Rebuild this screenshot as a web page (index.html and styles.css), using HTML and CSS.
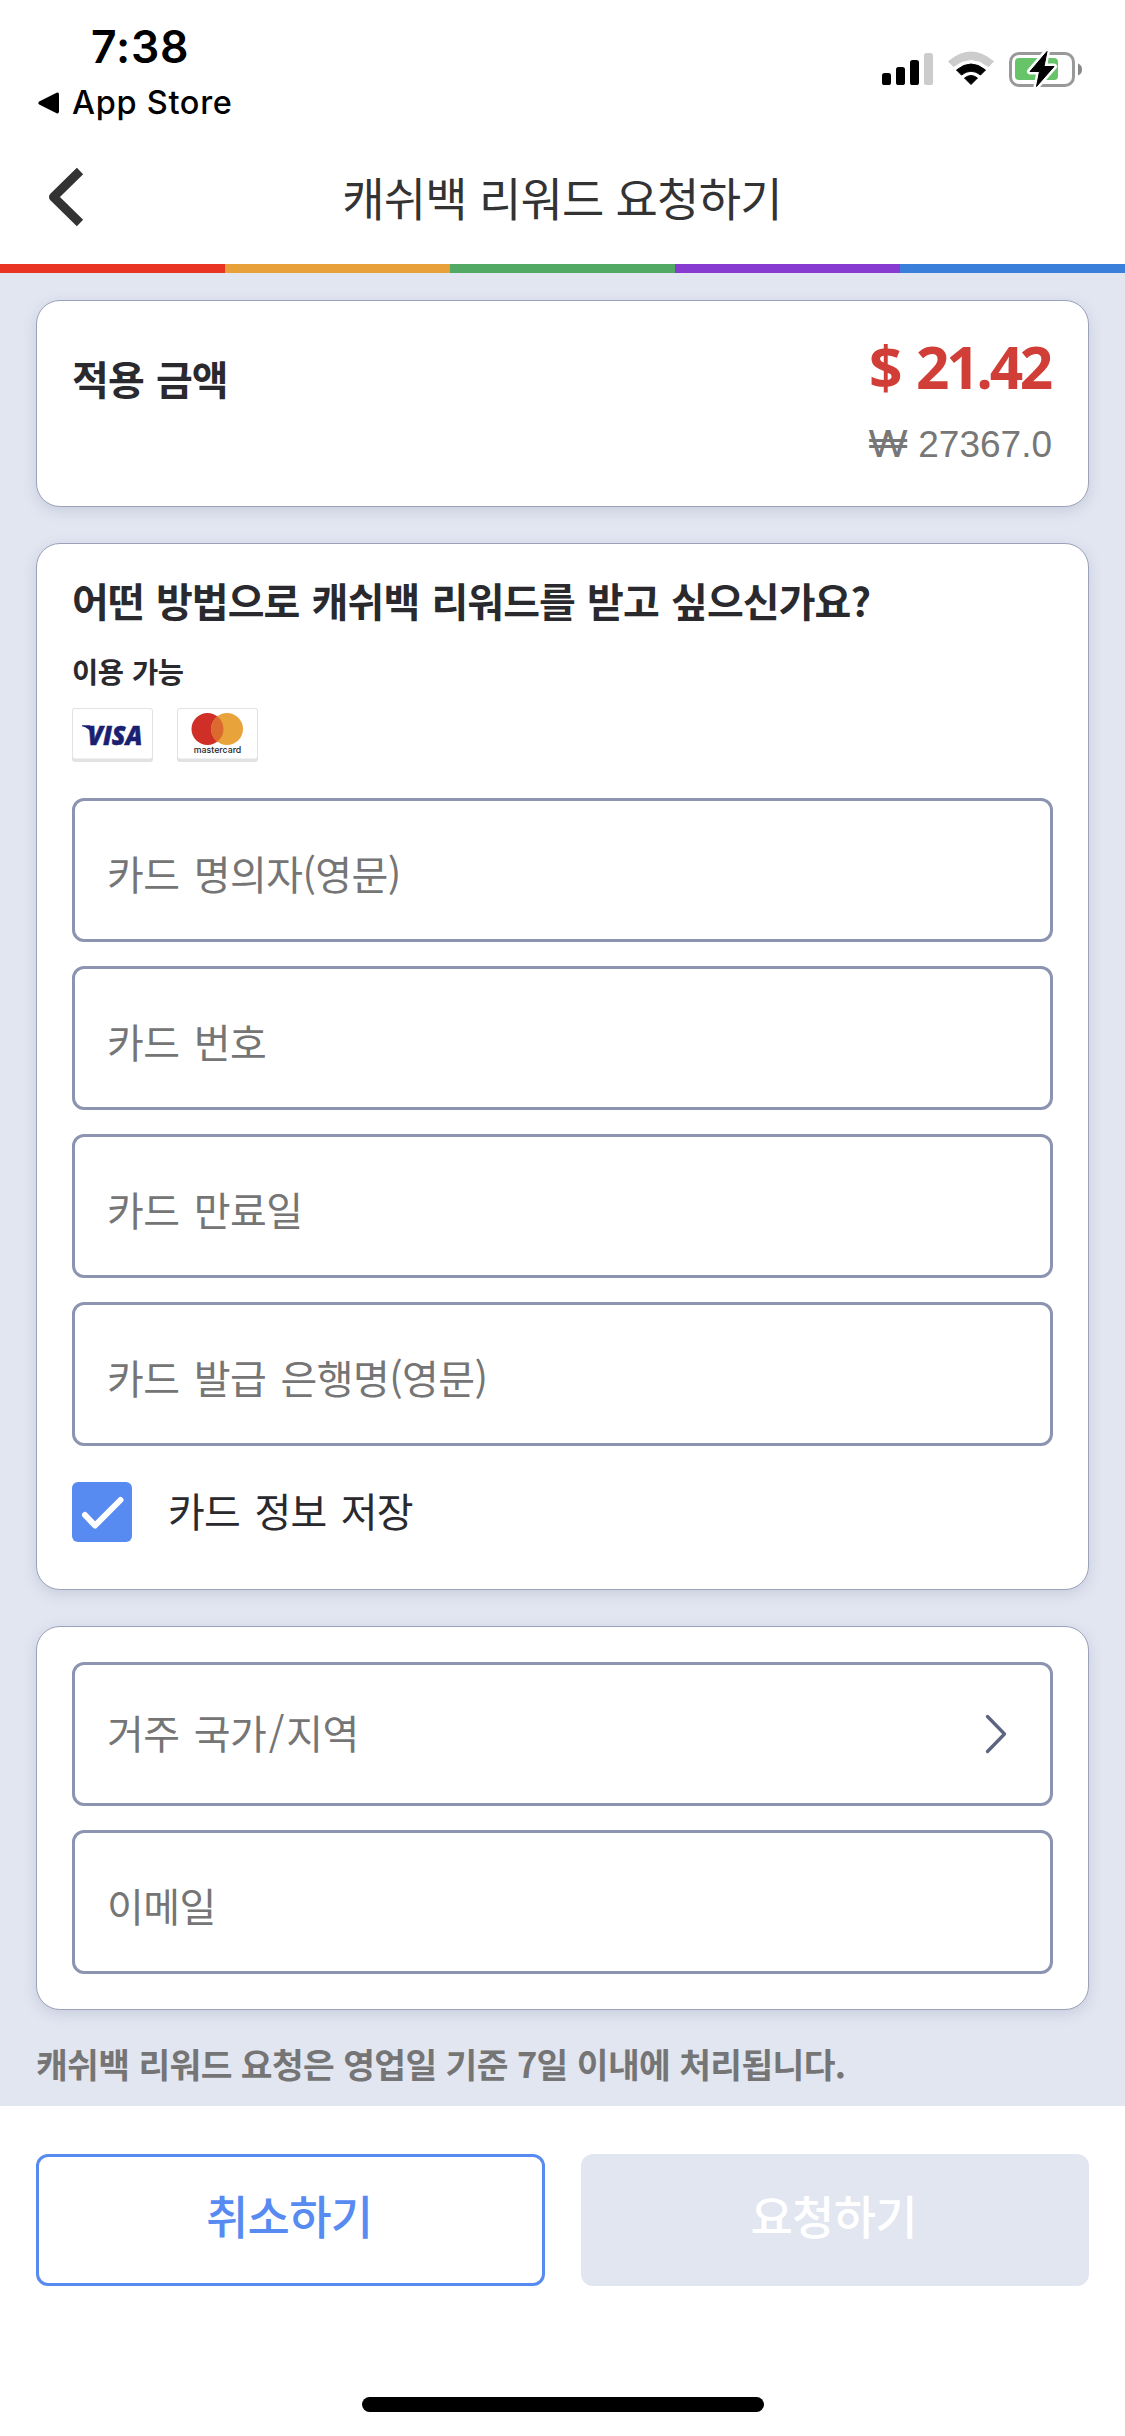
FILE: index.html
```html
<!DOCTYPE html>
<html lang="ko">
<head>
<meta charset="utf-8">
<title>캐쉬백 리워드 요청하기</title>
<link rel="stylesheet" href="styles.css">
</head>
<body>
<div class="screen">
  <div class="status">
    <div class="status-left">
      <div class="clock">7:38</div>
      <div class="return-app">
        <svg class="return-icon" width="22" height="22" viewBox="0 0 22 22"><path d="M1.2 9.6 18.6.8Q21 0 21 2.4V19.600Q21 22 18.600 21.200L1.200 12.400Q-.6 11 1.200 9.600Z"/></svg>
        <span>App Store</span>
      </div>
    </div>
    <svg class="status-icons" width="202" height="40" viewBox="0 0 202 40">
      <rect x="1" y="24" width="9" height="12" rx="2.600"/>
      <rect x="15" y="18" width="9" height="18" rx="2.600"/>
      <rect x="29" y="11" width="9" height="25" rx="2.600"/>
      <rect x="43" y="4" width="9" height="32" rx="2.600" fill="#ccc"/>
      <path d="M67.500 12.500Q90 -6.500 112.500 12.500L107.500 17.500Q90 3.500 72.500 17.500Z" fill="#ccc" stroke="#ccc" stroke-linejoin="round"/>
      <path d="M75.500 21Q90 9 104.500 21L99.500 26Q90 18.500 80.500 26Z" stroke="#000" stroke-linejoin="round"/>
      <path d="M83.500 29Q90 24 96.500 29L90 35.500Z" stroke="#000" stroke-linejoin="round"/>
      <rect x="129.500" y="4.500" width="63" height="32" rx="8.500" fill="none" stroke="#999" stroke-width="3"/>
      <path d="M197 14.500Q201 16 201 20.500T197 26.500Z" fill="#888"/>
      <rect x="134" y="9" width="43" height="22" rx="4" fill="#68c468"/>
      <path d="M166 2.500 149 22.500H158.500L155.500 37.500 173 17.500H163Z" stroke="#fff" stroke-width="6" stroke-linejoin="round"/>
      <path d="M166 2.500 149 22.500H158.500L155.500 37.500 173 17.500H163Z" stroke="#000" stroke-linejoin="round"/>
    </svg>
  </div>

  <header class="navbar">
    <svg class="back" width="38" height="62" viewBox="0 0 38 62"><path d="M33 5 6.500 31 33 57" fill="none" stroke="#333" stroke-width="9" stroke-linejoin="round"/></svg>
    <h1>캐쉬백 리워드 요청하기</h1>
  </header>

  <div class="stripe"><i class="red"></i><i class="orange"></i><i class="green"></i><i class="purple"></i><i class="blue"></i></div>

  <main>
    <section class="card amount">
      <h2>적용 금액</h2>
      <div class="values">
        <div class="usd">$ 21.42</div>
        <div class="krw"><span class="won">₩</span> 27367.0</div>
      </div>
    </section>

    <section class="card method">
      <h2>어떤 방법으로 캐쉬백 리워드를 받고 싶으신가요?</h2>
      <h3>이용 가능</h3>
      <div class="brands">
        <svg class="brand" width="81" height="54" viewBox="0 0 81 54">
          <rect width="81" height="54" rx="3" fill="#e2e2e2"/><rect x="1" y="1" width="79" height="49.500" rx="2" fill="#fff"/>
          <path d="M10 17.300H18L20 26Q17 20 10 18.300Z" fill="#1a1f71"/>
          <text class="visa" x="15.500" y="36.500" textLength="55" lengthAdjust="spacingAndGlyphs">VISA</text>
        </svg>
        <svg class="brand" width="81" height="54" viewBox="0 0 81 54">
          <rect width="81" height="54" rx="3" fill="#e2e2e2"/><rect x="1" y="1" width="79" height="49.500" rx="2" fill="#fff"/>
          <circle cx="30.500" cy="21" r="16" fill="#d02f28"/><circle cx="50" cy="21" r="16" fill="#e8a33b"/>
          <path d="M40.250 8.300A16 16 0 0 1 40.250 33.700A16 16 0 0 1 40.250 8.300Z" fill="#db6a2f"/>
          <text class="mc" x="16.800" y="45" textLength="47.500" lengthAdjust="spacingAndGlyphs">mastercard</text>
        </svg>
      </div>
      <div class="fields">
        <input class="field" placeholder="카드 명의자(영문)">
        <input class="field" placeholder="카드 번호">
        <input class="field" placeholder="카드 만료일">
        <input class="field" placeholder="카드 발급 은행명(영문)">
      </div>
      <label class="save">
        <svg width="60" height="60" viewBox="0 0 60 60"><rect width="60" height="60" rx="6" fill="#588bf1"/><path d="M13 33 23 43.500 48.500 18" fill="none" stroke="#fff" stroke-width="6" stroke-linecap="round" stroke-linejoin="round"/></svg>
        <span>카드 정보 저장</span>
      </label>
    </section>

    <section class="card contact">
      <div class="fields">
        <div class="field select"><span>거주 국가<b class="slash">/</b>지역</span>
          <svg width="22" height="40" viewBox="0 0 22 40"><path d="M2.500 2.500 19.500 20 2.500 37.500" fill="none" stroke="#5b6480" stroke-width="3.300" stroke-linecap="round" stroke-linejoin="round"/></svg>
        </div>
        <input class="field" placeholder="이메일">
      </div>
    </section>

    <p class="note">캐쉬백 리워드 요청은 영업일 기준 7일 이내에 처리됩니다.</p>
  </main>

  <footer>
    <div class="actions">
      <button class="btn cancel">취소하기</button>
      <button class="btn submit">요청하기</button>
    </div>
    <div class="home"></div>
  </footer>
</div>
</body>
</html>
```
FILE: styles.css
```css
* { box-sizing: border-box; margin: 0; padding: 0; }
body { font-family: "Noto Sans CJK KR", sans-serif; color: #2a2a2e; background: #fff; }
svg { display: block; flex: none; }
.screen { width: 1125px; height: 2436px; display: flex; flex-direction: column; overflow: hidden; }

.status { height: 132px; display: flex; justify-content: space-between; padding: 0 42px 0 38px; font-family: Inter, sans-serif; color: #000; }
.status-left { padding-top: 21px; }
.clock { font-size: 44.500px; font-weight: 600; line-height: 52px; padding-left: 53px; letter-spacing: .8px; }
.return-app { display: flex; align-items: center; gap: 12px; font-size: 32.500px; font-weight: 500; line-height: 40px; padding-top: 10px; letter-spacing: .7px; white-space: nowrap; }
.status-icons { margin-top: 49px; }

.navbar { height: 132px; display: grid; grid-template-columns: 38px 1fr 38px; align-items: center; padding: 0 48px 2px 47px; }
.navbar h1 { text-align: center; font-size: 46px; font-weight: 400; line-height: 60px; letter-spacing: -.8px; margin-top: -3px; color: #333; }
.stripe { height: 9px; display: flex; }
.stripe i { flex: 1; }
.red { background: #e93323; }
.orange { background: #e8a13a; }
.green { background: #52a964; }
.purple { background: #883bd1; }
.blue { background: #3a80da; }

main { height: 1833px; background: #e2e6f1; padding: 27px 36px 0; display: flex; flex-direction: column; gap: 36px; }
.card { background: #fff; border: 1px solid #9ba1b8; border-radius: 24px; padding: 35px; box-shadow: 0 4px 14px rgba(70, 82, 125, .17); }
.card h2 { font-size: 40px; font-weight: 700; line-height: 50px; letter-spacing: -.9px; word-spacing: 1.800px; white-space: nowrap; }
.amount { height: 207px; display: flex; justify-content: space-between; }
.amount h2 { padding-top: 17px; }
.values { text-align: right; white-space: nowrap; }
.usd { font-family: "Open Sans", sans-serif; font-size: 58.500px; font-weight: 700; line-height: 60px; letter-spacing: -3.300px; word-spacing: 5px; color: #d03e37; padding-right: 3px; }
.krw { font-family: "Liberation Sans", sans-serif; font-size: 37px; line-height: 40px; color: #777; padding: 29px 1px 0 0; }
.won { font-family: Inter, sans-serif; display: inline-block; line-height: 1; transform: scaleX(1.14); transform-origin: right; }
.method { height: 1047px; }
.method h2 { margin-top: -4px; }
.method h3 { font-size: 28.500px; font-weight: 700; line-height: 40px; letter-spacing: -.5px; margin-top: 26px; word-spacing: 1px; }
.brands { display: flex; gap: 24px; margin-top: 17px; }
.visa { font: italic 800 26px "Open Sans", sans-serif; fill: #1a1f71; stroke: #1a1f71; stroke-width: .5px; }
.mc { font: 500 9px Inter, sans-serif; fill: #222; }
.fields { display: flex; flex-direction: column; gap: 24px; }
.method .fields { margin-top: 36px; }
.field { width: 981px; height: 144px; border: 3px solid #8d94b1; border-radius: 12px; background: #fff; padding: 6px 33px 0 32px; font-family: inherit; font-size: 40px; letter-spacing: -.6px; word-spacing: 3.800px; color: #757575; outline: 0; }
.field::placeholder { color: #757575; opacity: 1; }
.select { display: flex; align-items: center; justify-content: space-between; padding: 0 43px 0 32px; }
.select span { margin-top: -4px; }
.slash { font-weight: 400; padding: 0 2.500px; }
.save { display: flex; align-items: center; gap: 36px; margin-top: 36px; font-size: 40px; line-height: 60px; height: 60px; letter-spacing: -.8px; word-spacing: 4px; }
.save span { margin-top: -4px; }
.contact { height: 384px; }
.note { font-size: 34.500px; font-weight: 700; line-height: 44px; letter-spacing: -.62px; margin-top: -5px; color: #757575; white-space: nowrap; }

footer { flex: 1; display: flex; flex-direction: column; align-items: center; justify-content: space-between; padding: 48px 36px 24px; }
.actions { width: 100%; display: grid; grid-template-columns: 1fr 1fr; gap: 36px; }
.btn { height: 132px; border-radius: 12px; font: 500 46px "Noto Sans CJK KR", sans-serif; letter-spacing: -.7px; padding-bottom: 13px; padding-right: 2px; }
.cancel { border: 3px solid #588bf1; background: #fff; color: #588bf1; }
.submit { border: 0; background: #e2e6f1; color: #fff; }
.home { width: 402px; height: 15px; border-radius: 8px; background: #000; }
```
